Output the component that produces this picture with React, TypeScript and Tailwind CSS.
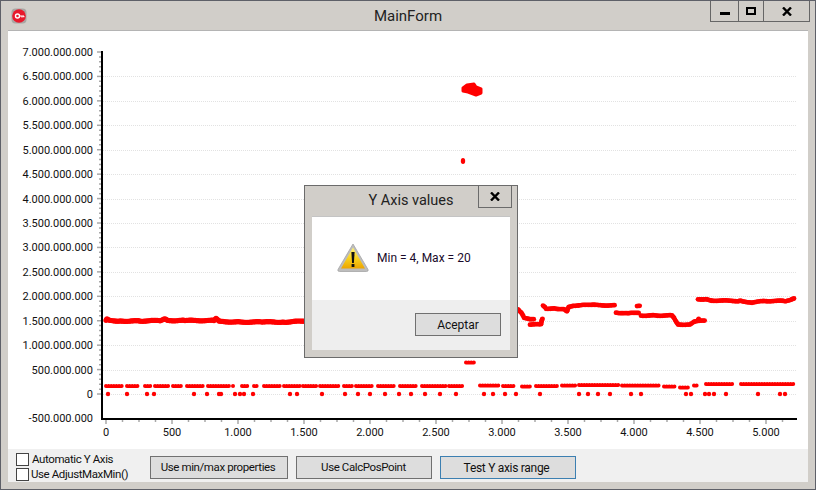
const YT = Array.from({ length: 15 }, (_, i) => i);
const yAt = (i: number) => 52 + i * 24.43;
const yLabels = ["7.000.000.000","6.500.000.000","6.000.000.000","5.500.000.000","5.000.000.000","4.500.000.000","4.000.000.000","3.500.000.000","3.000.000.000","2.500.000.000","2.000.000.000","1.500.000.000","1.000.000.000","500.000.000","0","-500.000.000"];
const xLabels = ["0","500","1.000","1.500","2.000","2.500","3.000","3.500","4.000","4.500","5.000"];

const bands: [number, number][][] = [
  [[106,320.5],[107,318.5],[110,320.5],[120,321],[140,321],[160,320.5],[165,318.5],[168,320.5],[185,320.5],[214,320.5],[216,318.5],[220,321.5],[240,322],[262,322],[285,322],[305,321],[400,321]],
  [[510,309.5],[518,309.5],[521,312.5],[524,317.5],[530,319.5],[535,319.5]],
  [[530,324.5],[541,324.5],[542,319.5],[543,317.5]],
  [[543,305.5],[546,308.5],[556,308.5],[565,309.5],[567,311.5],[569,306.5],[574,305.5],[590,305],[616,305.5]],
  [[616,312.5],[628,313.5],[640,312.5]],
  [[637,306],[641,306]],
  [[641,315.5],[655,315.5],[672,315.5],[675,319.5],[678,324.5],[690,324.5],[695,321.5],[706,320.5]],
  [[698,320.5],[699,317.5]],
  [[698,299],[706,299.5],[712,300.5],[740,301],[752,302.5],[765,301],[785,301],[792,299.5],[795,298.5]],
];

function sample(pts: [number, number][]) {
  const out: [number, number, number][] = [];
  let n = 0;
  for (let s = 0; s < pts.length - 1; s++) {
    const [x0, y0] = pts[s];
    const [x1, y1] = pts[s + 1];
    const steps = Math.max(1, Math.ceil(Math.hypot(x1 - x0, y1 - y0) / 1.5));
    for (let k = 0; k < steps; k++) {
      const t = k / steps;
      n += 1;
      const j = Math.sin(n * 12.9898 + x0) * 0.35;
      out.push([x0 + (x1 - x0) * t, y0 + (y1 - y0) * t + j, 2.4]);
    }
  }
  return out;
}

const blob = "463,88 467,85 474,84 476,87 481,89 481,93 476,95 468,92 463,91";

const lowerSegs: [number, number, number][] = [
  [106,124,386],[127,140,386],[145,152,386],[155,169,386],[173,183,386],[187,204,386],[208,230,386],[233,234,386],[242,248,386],[254,257,386],
  [264,280,386],[284,300,386],[303,317,386],[320,340,386],[344,352,386],[356,372,386],[378,396,386],[400,418,386],[422,446,386],[449,463,386],
  [466,476,362.5],
  [480,500,385.5],[503,516,386],[522,530,386.5],[536,558,386],[562,576,385.5],[579,620,385],[622,660,385.5],[664,676,386.5],[680,690,387.5],[694,698,385.5],
  [706,734,384],[741,795,384],
];
const lowerDots: number[] = [108,127,147,154,194,207,219,221,235,240,244,253,290,297,322,345,358,370,385,399,411,425,440,456,484,493,505,516,540,579,588,598,610,631,641,686,691,705,709,714,726,758,780,785];

function WarningIcon() {
  return (
    <svg width="32" height="30" viewBox="0 0 32 30" className="shrink-0">
      <defs>
        <linearGradient id="w" x1="0" y1="0" x2="0" y2="1">
          <stop offset="0" stopColor="#fff27a" />
          <stop offset="0.55" stopColor="#f8cf1a" />
          <stop offset="1" stopColor="#eda400" />
        </linearGradient>
      </defs>
      <path d="M16 1 L31 26.5 Q31.6 28.5 29.5 28.5 H2.5 Q0.4 28.5 1 26.5 Z" fill="#bdbdbd" stroke="#a6a6a6" strokeWidth="0.8" />
      <path d="M16 4.5 L28 25.5 H4 Z" fill="url(#w)" />
      <path d="M14.4 9 H17.6 L16.9 20 H15.1 Z" fill="#111" />
      <rect x="14.6" y="21" width="2.8" height="3" fill="#111" />
    </svg>
  );
}

function AppIcon() {
  return (
    <svg width="16" height="16" viewBox="0 0 16 16">
      <rect x="0.5" y="0.5" width="15" height="15" rx="4" fill="#a9a6a3" />
      <circle cx="8" cy="8" r="6.8" fill="#e8192c" />
      <circle cx="6.5" cy="8" r="2" fill="none" stroke="#fff" strokeWidth="1.4" />
      <path d="M8.5 8 H13 M11 8 V9.5 M12.8 8 V9.2" stroke="#fff" strokeWidth="1.2" />
    </svg>
  );
}

function Chart() {
  return (
    <svg width="800" height="418" viewBox="8 31 800 418" className="block font-['Roboto',sans-serif] text-[11px]">
      {YT.map((i) => (
        i > 0 ? <line key={i} x1="103" x2="797" y1={Math.round(yAt(i)) + 0.5} y2={Math.round(yAt(i)) + 0.5} stroke="#e2e2e2" strokeDasharray="1 1" /> : null
      ))}
      {Array.from({ length: 71 }, (_, i) => {
        const y = 52 + i * 4.886;
        const major = i % 5 === 0;
        return <line key={i} x1={major ? 97 : 99} x2="101" y1={y} y2={y} stroke="#a8a8a8" strokeWidth="1.5" />;
      })}
      {Array.from({ length: 42 }, (_, i) => {
        const x = 106 + i * 16.5;
        const major = i % 4 === 0;
        return <line key={i} x1={x} x2={x} y1="420" y2={major ? 424 : 422} stroke="#a8a8a8" strokeWidth="1.5" />;
      })}
      <rect x="101" y="51" width="2" height="369" fill="#000" />
      <rect x="101" y="418" width="696" height="2" fill="#000" />
      {yLabels.map((t, i) => (
        <text key={t} x="93" y={yAt(i) + 4} textAnchor="end" fill="#111">{t}</text>
      ))}
      {xLabels.map((t, i) => (
        <text key={t} x={106 + i * 66} y="436" textAnchor="middle" fill="#111">{t}</text>
      ))}
      <g fill="#ff0000">
        {bands.flatMap((b, i) => sample(b).map(([x, y, r], k) => (
          <circle key={`${i}-${k}`} cx={x} cy={y} r={i === 0 ? r + 0.2 : r} />
        )))}
        <polygon points={blob} stroke="#ff0000" strokeWidth="3" strokeLinejoin="round" />
        {lowerDots.map((x, i) => (
          <circle key={i} cx={x} cy="394" r="2.2" />
        ))}
        <ellipse cx="463" cy="161" rx="2.2" ry="3" />
      </g>
      <g fill="none" stroke="#ff0000" strokeLinecap="round">
        {lowerSegs.map(([a, b, y], i) => (
          <line key={i} x1={a} x2={b} y1={y} y2={y} strokeWidth="4" strokeDasharray="0.01 2.6" />
        ))}
      </g>
    </svg>
  );
}

function Check({ label, ml }: { label: string; ml: string }) {
  return (
    <div className="flex items-center h-[15px]">
      <span className="w-[13px] h-[13px] border border-[#444] bg-white shrink-0" />
      <span className={ml}>{label}</span>
    </div>
  );
}

function Btn({ label, w, blue, extra }: { label: string; w: string; blue?: boolean; extra?: string }) {
  return (
    <div className={`${w} h-[23px] flex items-center justify-center bg-[#dddddd] border ${blue ? "border-[#3c7fb1]" : "border-[#707070]"} ${extra ?? ""}`}>{label}</div>
  );
}

function Dialog() {
  return (
    <div className="absolute left-[303px] top-[184px] w-[214px] h-[173px] bg-[#d1cec9] border border-[#6b6b6b] flex flex-col">
      <div className="h-[30px] relative flex items-center justify-center text-[14.5px] text-[#222] shrink-0">
        <span>Y Axis values</span>
        <div className="absolute right-[5px] top-0 w-[34px] h-[22px] border-x border-b border-[#6b6b6b] flex items-center justify-center">
          <svg width="10" height="9" viewBox="0 0 10 9"><path d="M1 0.5 L9 8.5 M9 0.5 L1 8.5" stroke="#000" strokeWidth="2.4" /></svg>
        </div>
      </div>
      <div className="mx-[7px] flex flex-col h-[134px] border-t border-[#c4c4c4]">
        <div className="h-[83px] bg-white flex items-center pl-[25px] gap-[8px] text-[12px] text-[#1a0a2a] pb-[1px]">
          <WarningIcon />
          <span>Min = 4, Max = 20</span>
        </div>
        <div className="flex-1 bg-[#eeeeee] flex justify-end items-start pt-[13px] pr-[9px] text-[12px] text-[#111]">
          <Btn label="Aceptar" w="w-[86px]" />
        </div>
      </div>
    </div>
  );
}

export default function App() {
  return (
    <div className="relative w-[816px] h-[490px] bg-[#d1cec9] border border-[#5e6068] flex flex-col font-['Roboto',sans-serif] overflow-hidden">
      <div className="h-[29px] shrink-0 relative flex items-center justify-center">
        <div className="absolute left-[10px] top-[7px]"><AppIcon /></div>
        <span className="text-[15px] text-[#222] mt-[1px]">MainForm</span>
        <div className="absolute right-[5px] top-0 h-[21px] flex border-x border-b border-[#666]">
          <div className="w-[28px] flex items-center justify-center border-r border-[#666]"><span className="block w-[10px] h-[3px] bg-black mt-[5px]" /></div>
          <div className="w-[25px] flex items-center justify-center border-r border-[#666]"><span className="block w-[10px] h-[8px] border-2 border-black" /></div>
          <div className="w-[45px] flex items-center justify-center">
            <svg width="10" height="9" viewBox="0 0 10 9"><path d="M1 0.5 L9 8.5 M9 0.5 L1 8.5" stroke="#000" strokeWidth="2.4" /></svg>
          </div>
        </div>
      </div>
      <div className="mx-[7px] flex flex-col border-t border-[#b4b4b4] h-[452px] shrink-0 border-b border-b-[#b4b4b4]">
        <div className="bg-white h-[418px] shrink-0"><Chart /></div>
        <div className="flex-1 bg-[#f0f0f0] flex items-start text-[11.5px] tracking-[-0.4px] text-[#111]">
          <div className="flex flex-col pl-[8px] pt-[3px] w-[142px] shrink-0">
            <Check label="Automatic Y Axis" ml="ml-[3px]" />
            <Check label="Use AdjustMaxMin()" ml="ml-[2px]" />
          </div>
          <div className="flex gap-[8px] pt-[7px]">
            <Btn label="Use min/max properties" w="w-[138px]" extra="pr-[2px]" />
            <Btn label="Use CalcPosPoint" w="w-[136px]" extra="pr-[1px]" />
            <Btn label="Test Y axis range" w="w-[136px]" blue extra="pr-[3px] text-[12px] tracking-[-0.3px]" />
          </div>
        </div>
      </div>
      <Dialog />
    </div>
  );
}
